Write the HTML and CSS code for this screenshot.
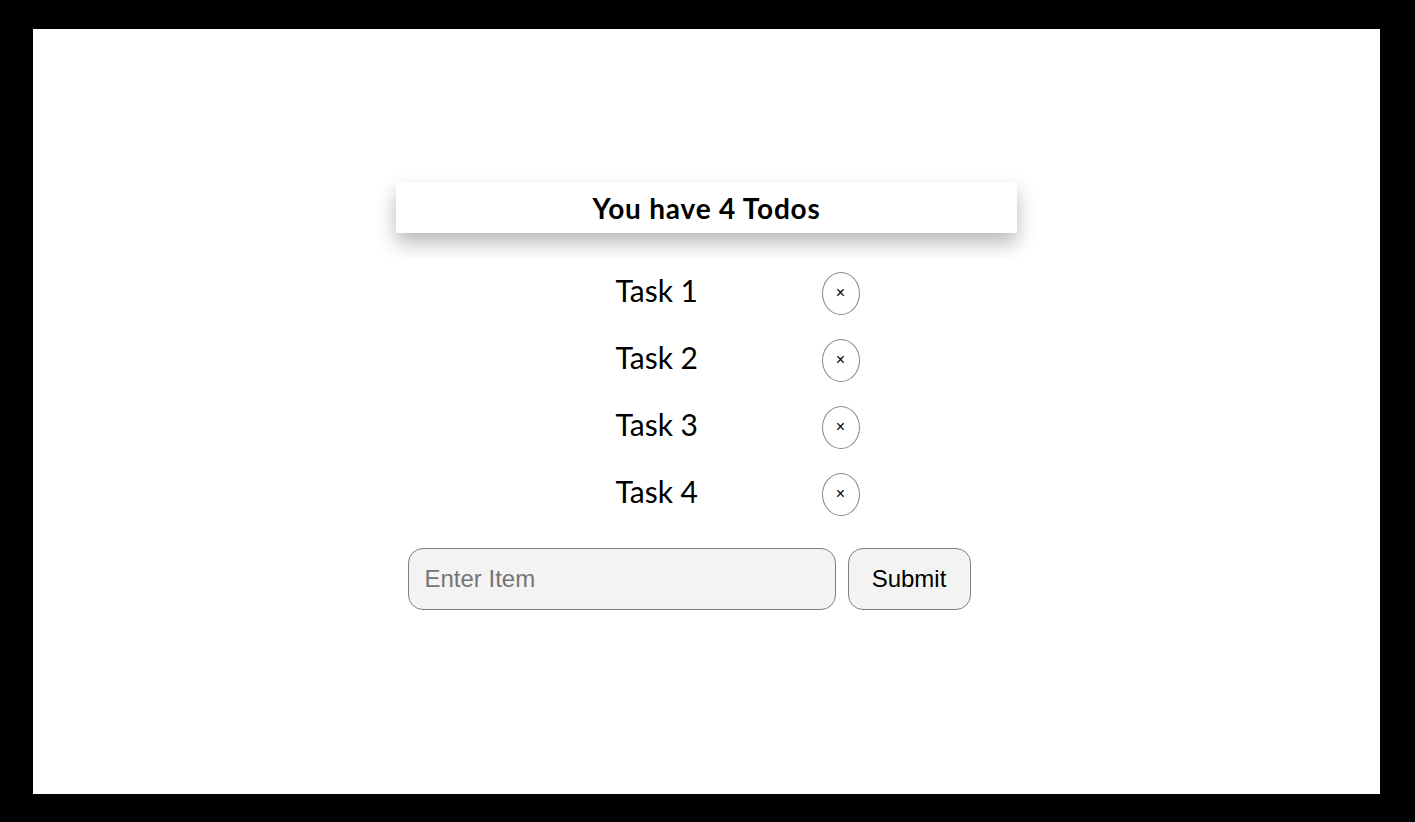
FILE: index.html
```html
<!DOCTYPE html>
<html>
<head>
<meta charset="utf-8">
<link rel="stylesheet" href="styles.css">
</head>
<body>
<div class="frame">
  <div class="app">
    <div class="header">You have 4 Todos</div>
    <ul class="list">
      <li class="item"><span class="label">Task 1</span><button class="del">×</button></li>
      <li class="item"><span class="label">Task 2</span><button class="del">×</button></li>
      <li class="item"><span class="label">Task 3</span><button class="del">×</button></li>
      <li class="item"><span class="label">Task 4</span><button class="del">×</button></li>
    </ul>
    <form class="add">
      <input class="field" type="text" placeholder="Enter Item">
      <button class="submit" type="button">Submit</button>
    </form>
  </div>
</div>
</body>
</html>
```
FILE: styles.css
```css
html, body {
  margin: 0;
  padding: 0;
  background: #000;
}
.frame {
  margin: 29px 35px 0 33px;
  height: 765px;
  background: #fff;
  display: flex;
  justify-content: center;
}
.app {
  margin-top: 153px;
  width: 621px;
  display: flex;
  flex-direction: column;
  align-items: center;
}
.header {
  width: 621px;
  height: 51px;
  box-sizing: border-box;
  background: #fff;
  box-shadow: 0 10px 20px rgba(0, 0, 0, 0.28);
  font-family: Lato, "Open Sans", sans-serif;
  font-weight: 700;
  font-size: 28px;
  letter-spacing: 0.8px;
  color: #000;
  display: flex;
  align-items: center;
  justify-content: center;
  padding-top: 1px;
}
.list {
  list-style: none;
  margin: 25px 0 0 0;
  padding: 0;
  width: 612px;
  background: #fff;
  position: relative;
}
.item {
  height: 67px;
  display: flex;
  align-items: center;
  padding-left: 215px;
}
.label {
  width: 206px;
  font-family: Lato, "Open Sans", sans-serif;
  font-size: 30px;
  color: #000;
  margin-top: -3px;
}
.del {
  width: 38px;
  height: 43px;
  border: 1px solid #8a8a8a;
  border-radius: 50%;
  background: #fff;
  font-family: Arial, "Liberation Sans", sans-serif;
  font-size: 16px;
  color: #000;
  padding: 0;
  margin-top: 3px;
}
.add {
  width: 612px;
  margin-top: 22px;
  display: flex;
  gap: 12px;
  padding-left: 7px;
  box-sizing: border-box;
}
.field {
  width: 428px;
  height: 62px;
  box-sizing: border-box;
  border: 1px solid #7f7f7f;
  border-radius: 15px;
  background: #f3f3f3;
  padding: 0 16px;
  font-family: Arial, "Liberation Sans", sans-serif;
  font-size: 24px;
  color: #000;
  margin: 0;
}
.field::placeholder {
  color: #757575;
}
.submit {
  width: 123px;
  height: 62px;
  box-sizing: border-box;
  border: 1px solid #7f7f7f;
  border-radius: 15px;
  background: #f3f3f3;
  font-family: Arial, "Liberation Sans", sans-serif;
  font-size: 24px;
  color: #000;
  padding: 0;
}
```
